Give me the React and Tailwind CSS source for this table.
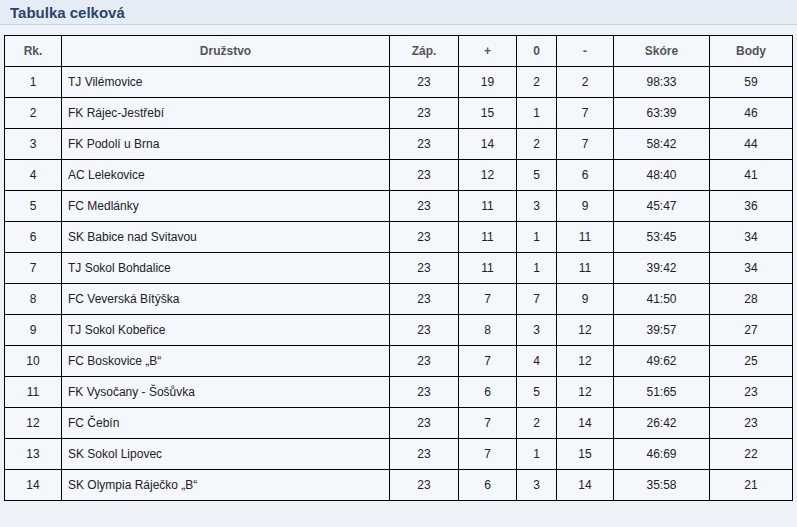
import React from "react";

const rows = [
  [1, "TJ Vilémovice", 23, 19, 2, 2, "98:33", 59],
  [2, "FK Rájec-Jestřebí", 23, 15, 1, 7, "63:39", 46],
  [3, "FK Podolí u Brna", 23, 14, 2, 7, "58:42", 44],
  [4, "AC Lelekovice", 23, 12, 5, 6, "48:40", 41],
  [5, "FC Medlánky", 23, 11, 3, 9, "45:47", 36],
  [6, "SK Babice nad Svitavou", 23, 11, 1, 11, "53:45", 34],
  [7, "TJ Sokol Bohdalice", 23, 11, 1, 11, "39:42", 34],
  [8, "FC Veverská Bítýška", 23, 7, 7, 9, "41:50", 28],
  [9, "TJ Sokol Kobeřice", 23, 8, 3, 12, "39:57", 27],
  [10, "FC Boskovice „B“", 23, 7, 4, 12, "49:62", 25],
  [11, "FK Vysočany - Šošůvka", 23, 6, 5, 12, "51:65", 23],
  [12, "FC Čebín", 23, 7, 2, 14, "26:42", 23],
  [13, "SK Sokol Lipovec", 23, 7, 1, 15, "46:69", 22],
  [14, "SK Olympia Ráječko „B“", 23, 6, 3, 14, "35:58", 21],
];

const headers = ["Rk.", "Družstvo", "Záp.", "+", "0", "-", "Skóre", "Body"];
const widths = ["w-[57px]", "w-[328px]", "w-[69px]", "w-[58px]", "w-[40px]", "w-[57px]", "w-[96px]", "w-[83px]"];

export default function App() {
  return (
    <div className="w-[797px] h-[527px] bg-[#edf2f8] font-['Liberation_Sans',Arial,sans-serif] overflow-hidden">
      <div className="h-[25px] bg-[#e5ecf5] border-b border-[#c6d4e4] pl-[10px] flex items-center">
        <span className="text-[15px] font-bold text-[#27466c] leading-none">Tabulka celková</span>
      </div>
      <div className="pt-[10px] pl-[4px]">
        <table className="table-fixed border-collapse w-[788px] bg-[#f4f7fb] text-[12px]">
          <colgroup>
            {widths.map((w, i) => (
              <col key={i} className={w} />
            ))}
          </colgroup>
          <thead>
            <tr className="h-[31px]">
              {headers.map((h, i) => (
                <th key={i} className="border border-black text-center font-bold text-[#555555] p-0">
                  {h}
                </th>
              ))}
            </tr>
          </thead>
          <tbody>
            {rows.map((r) => (
              <tr key={r[0]} className="h-[31px]">
                {r.map((c, i) => (
                  <td
                    key={i}
                    className={
                      "border border-black text-[#222222] p-0 " +
                      (i === 1 ? "text-left pl-[6px]" : "text-center")
                    }
                  >
                    {c}
                  </td>
                ))}
              </tr>
            ))}
          </tbody>
        </table>
      </div>
    </div>
  );
}
